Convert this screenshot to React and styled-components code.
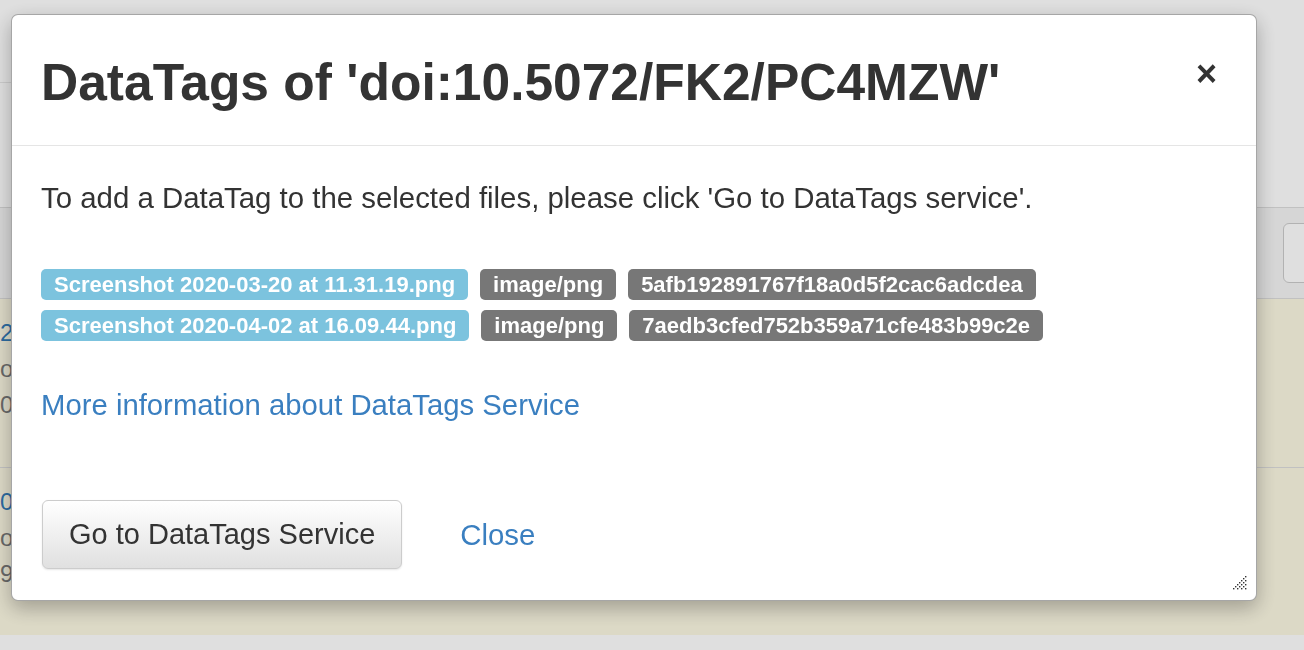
import styled, { createGlobalStyle } from "styled-components";

const GlobalStyle = createGlobalStyle`
  html, body {
    margin: 0;
    padding: 0;
    height: 100%;
    overflow: hidden;
    font-family: "Liberation Sans", Arial, sans-serif;
    color: #333;
    background: #fff;
  }
`;

const files = [
  {
    name: "Screenshot 2020-03-20 at 11.31.19.png",
    type: "image/png",
    hash: "5afb192891767f18a0d5f2cac6adcdea",
  },
  {
    name: "Screenshot 2020-04-02 at 16.09.44.png",
    type: "image/png",
    hash: "7aedb3cfed752b359a71cfe483b99c2e",
  },
];

const rows = [
  { link: "20", line2: "or", line3: "0" },
  { link: "02", line2: "or", line3: "9:" },
];

const App = () => {
  return (
    <>
      <GlobalStyle />
      <Page>
        <TopArea>
          <TopStrip />
        </TopArea>
        <TableHead>
          <HeadButton />
        </TableHead>
        {rows.map((r, i) => (
          <FileRow key={i} $first={i === 0}>
            <RowText>
              <RowLink>{r.link}</RowLink>
              <RowMeta>{r.line2}</RowMeta>
              <RowMeta>{r.line3}</RowMeta>
            </RowText>
          </FileRow>
        ))}
      </Page>
      <Backdrop />
      <Dialog>
        <Header>
          <Title>DataTags of 'doi:10.5072/FK2/PC4MZW'</Title>
          <CloseX>×</CloseX>
        </Header>
        <Body>
          <Intro>
            To add a DataTag to the selected files, please click 'Go to DataTags
            service'.
          </Intro>
          <TagList>
            {files.map((f) => (
              <TagRow key={f.hash}>
                <Label $info>{f.name}</Label>
                <Label>{f.type}</Label>
                <Label>{f.hash}</Label>
              </TagRow>
            ))}
          </TagList>
          <MoreLink href="#">More information about DataTags Service</MoreLink>
        </Body>
        <Footer>
          <GoButton>Go to DataTags Service</GoButton>
          <CloseLink href="#">Close</CloseLink>
        </Footer>
        <ResizeHandle viewBox="0 0 14 14" width="14" height="14">
          {[...Array(7)].map((_, r) =>
            [...Array(7)].map((_, c) =>
              (r + c) % 2 === 0 && c >= 6 - r ? (
                <rect key={`${r}-${c}`} x={c * 2} y={r * 2} width="1.4" height="1.4" fill="#333" />
              ) : null
            )
          )}
        </ResizeHandle>
      </Dialog>
    </>
  );
};

const Page = styled.div`
  display: flex;
  flex-direction: column;
  height: 100vh;
`;

const TopArea = styled.div`
  height: 207px;
  border-bottom: 1px solid #ddd;
  display: flex;
  flex-direction: column;
`;

const TopStrip = styled.div`
  width: 40%;
  height: 82px;
  border-bottom: 1px solid #e8e8e8;
`;

const TableHead = styled.div`
  height: 90px;
  background: #f5f5f5;
  display: flex;
  justify-content: flex-end;
  align-items: center;
  border-bottom: 1px solid #ddd;
`;

const HeadButton = styled.div`
  width: 40px;
  height: 58px;
  margin-right: -21px;
  border: 1px solid #ccc;
  border-radius: 6px;
  background: #fff;
`;

const FileRow = styled.div`
  height: 168px;
  background: #fcf8e3;
  border-top: ${(p) => (p.$first ? "none" : "1px solid #ddd")};
  display: flex;
  padding-top: 20px;
  box-sizing: border-box;
`;

const RowText = styled.div`
  display: flex;
  flex-direction: column;
  gap: 8px;
  font-size: 24px;
  line-height: 28px;
`;

const RowLink = styled.span`
  color: #337ab7;
`;

const RowMeta = styled.span`
  color: #777;
`;

const Backdrop = styled.div`
  position: fixed;
  inset: 0;
  background: rgba(0, 0, 0, 0.125);
`;

const Dialog = styled.div`
  position: fixed;
  left: 11px;
  top: 14px;
  width: 1246px;
  height: 587px;
  box-sizing: border-box;
  background: #fff;
  border: 1px solid rgba(0, 0, 0, 0.35);
  border-radius: 7px;
  box-shadow: 0 7px 20px rgba(0, 0, 0, 0.28);
  display: flex;
  flex-direction: column;
`;

const Header = styled.div`
  height: 131px;
  box-sizing: border-box;
  border-bottom: 1px solid #e5e5e5;
  padding: 0 39px 0 29px;
  display: flex;
  align-items: center;
  justify-content: space-between;
`;

const Title = styled.h4`
  margin: 0;
  padding-top: 6px;
  font-size: 51.5px;
  font-weight: bold;
  color: #333;
  line-height: 1;
`;

const CloseX = styled.span`
  font-size: 36px;
  font-weight: bold;
  color: #333;
  line-height: 1;
  margin-top: -12px;
`;

const Body = styled.div`
  padding: 34px 29px 0;
  display: flex;
  flex-direction: column;
  align-items: flex-start;
`;

const Intro = styled.p`
  margin: 0;
  font-size: 29.4px;
  line-height: 36px;
  color: #333;
`;

const TagList = styled.div`
  margin-top: 53px;
  display: flex;
  flex-direction: column;
  gap: 10px;
`;

const TagRow = styled.div`
  display: flex;
  gap: 12px;
`;

const Label = styled.span`
  display: inline-block;
  font-size: 22px;
  font-weight: bold;
  line-height: 22px;
  padding: 5px 13px 4px;
  border-radius: 5px;
  color: #fff;
  background: ${(p) => (p.$info ? "#7cc3de" : "#777")};
`;

const MoreLink = styled.a`
  margin-top: 46px;
  font-size: 29.3px;
  line-height: 36px;
  color: #3a7fc0;
  text-decoration: none;
`;

const Footer = styled.div`
  margin-top: auto;
  padding: 0 29px 31px 30px;
  display: flex;
  align-items: center;
  gap: 58px;
`;

const GoButton = styled.button`
  height: 69px;
  padding: 0 26px;
  font-family: "Liberation Sans", Arial, sans-serif;
  font-size: 29px;
  color: #333;
  border: 1px solid #ccc;
  border-radius: 6px;
  background: linear-gradient(#fff, #e0e0e0);
  box-shadow: 0 1px 2px rgba(0, 0, 0, 0.1);
`;

const CloseLink = styled.a`
  font-size: 29.4px;
  color: #3a7fc0;
  text-decoration: none;
`;

const ResizeHandle = styled.svg`
  position: absolute;
  right: 9px;
  bottom: 10px;
`;

export default App;
